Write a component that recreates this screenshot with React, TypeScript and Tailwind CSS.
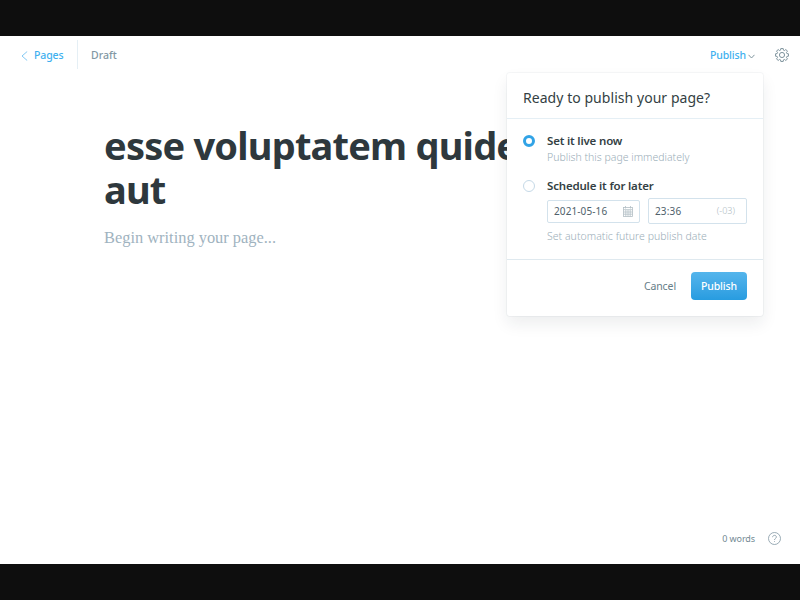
import React from 'react';

function GearIcon() {
  const teeth = Array.from({ length: 8 }, (_, i) => {
    const a = (i * Math.PI) / 4;
    const point = (radius: number, offset: number) =>
      `${(12 + radius * Math.sin(a + offset)).toFixed(2)} ${(12 - radius * Math.cos(a + offset)).toFixed(2)}`;
    return `${i === 0 ? 'M' : 'L'}${point(8.8, -0.27)} L${point(11.3, -0.18)} Q${point(11.8, 0)} ${point(11.3, 0.18)} L${point(8.8, 0.27)} Q${point(8.2, 0.39)} ${point(8.8, 0.51)}`;
  }).join(' ');
  return (
    <svg className="h-[14px] w-[14px]" viewBox="0 0 24 24" fill="none" stroke="#738a94" strokeWidth="1.6" strokeLinejoin="round">
      <path d={`${teeth} Z`} />
      <circle cx="12" cy="12" r="4.4" />
    </svg>
  );
}

function CalendarIcon() {
  return (
    <svg className="h-[11px] w-[10px]" viewBox="0 0 10 11" fill="none" stroke="#b3bfc5" strokeWidth="0.8">
      <rect x="0.5" y="1.5" width="9" height="9" />
      <path d="M0.5 3.7H9.5M0.5 6H9.5M0.5 8.2H9.5M2.8 3.7V10.5M5 3.7V10.5M7.2 3.7V10.5M2.5 0V2.5M7.5 0V2.5" />
    </svg>
  );
}

function TopBar() {
  return (
    <header className="flex h-[38px] items-center pl-[21px] pr-[11.5px] pt-px text-[10.5px] font-medium">
      <a className="flex w-[56px] items-center tracking-[-0.01em] text-[#3eb0ef]">
        <svg className="mr-[6px] h-[10px] w-[7px]" viewBox="0 0 7 10" fill="none" stroke="#65bdf0" strokeWidth="0.8">
          <path d="M6.2 0.5L1 5L6.2 9.5" />
        </svg>
        <span className="pt-px">Pages</span>
      </a>
      <div className="-mt-[3px] h-[29px] w-px bg-[#e5eff5]" />
      <span className="ml-[13px] pt-px text-[#8297a3]">Draft</span>
      <button className="ml-auto flex items-center tracking-[-0.01em] text-[#3eb0ef]">
        <span className="pt-px">Publish</span>
        <svg className="ml-[2px] mt-[2px] h-[5px] w-[7px]" viewBox="0 0 7 5" fill="none" stroke="#738a94" strokeWidth="0.9">
          <path d="M0.5 0.8L3.5 4L6.5 0.8" />
        </svg>
      </button>
      <button className="-mt-px ml-[19.5px]">
        <GearIcon />
      </button>
    </header>
  );
}

function PublishMenu() {
  return (
    <section className="absolute left-[507px] top-[37px] h-[243px] w-[256px] rounded-[3px] bg-white shadow-[0_0_0_1px_rgba(99,114,130,0.06),0_8px_16px_rgba(27,39,51,0.08)]">
      <div className="flex h-[46px] items-center border-b border-[#e5eff5] px-4 pt-[4px] text-[14px] tracking-[0.05px] text-[#343f44]">
        Ready to publish your page?
      </div>
      <div className="h-[141px] border-b border-[#dfe9ef] px-4 pt-[15px]">
        <div className="flex h-[45px]">
          <span className="mt-[1px] h-[12px] w-[12px] rounded-full border-[3.5px] border-[#31a3e6] bg-white" />
          <div className="ml-3">
            <div className="text-[11.5px] font-semibold leading-[14px] tracking-[-0.18px] text-[#343f44]">Set it live now</div>
            <div className="mt-px text-[10.5px] font-light leading-4 text-[#9baeb8]">Publish this page immediately</div>
          </div>
        </div>
        <div className="flex">
          <span className="mt-[1px] h-[12px] w-[12px] rounded-full border border-[#c5d9e7]" />
          <div className="ml-3">
            <div className="text-[11.5px] font-semibold leading-[14px] tracking-[-0.18px] text-[#343f44]">Schedule it for later</div>
            <div className="mt-[5px] flex items-center gap-2 text-[10px] text-[#50616b]">
              <div className="flex h-[23px] w-[93px] items-center justify-between rounded-[2px] border border-[#d3e2ec] pl-[6px] pr-[6px]">
                <span className="tracking-[0.1px]">2021-05-16</span>
                <CalendarIcon />
              </div>
              <div className="flex h-[26px] w-[99px] items-center justify-between rounded-[2px] border border-[#d3e2ec] pl-[6px] pr-[11px]">
                <span className="tracking-[0.15px]">23:36</span>
                <span className="text-[9px] font-light text-[#abb9c0]">(-03)</span>
              </div>
            </div>
            <div className="mt-[4px] text-[10.5px] font-light leading-4 tracking-[0.03px] text-[#9baeb8]">Set automatic future publish date</div>
          </div>
        </div>
      </div>
      <div className="flex items-center justify-end gap-[15px] px-4 pt-[12px] text-[10.5px]">
        <button className="pt-px tracking-[-0.1px] text-[#667d87]">Cancel</button>
        <button className="h-[28px] w-[56px] rounded-[4px] bg-gradient-to-b from-[#54b5ec] to-[#279ce0] pt-px font-medium tracking-[-0.01em] text-white">Publish</button>
      </div>
    </section>
  );
}

export default function App() {
  return (
    <div className="flex h-[600px] w-[800px] flex-col overflow-hidden bg-[#0e0e0e] py-[36px] font-['Noto_Sans',sans-serif]">
      <main className="relative flex h-[528px] flex-col bg-white">
        <TopBar />
        <article className="px-[104px] pt-[49px]">
          <h1 className="whitespace-nowrap text-[38px] font-bold leading-[44px] tracking-[-0.8px] text-[#2e383d]">
            esse voluptatem quidem
            <br />
            aut
          </h1>
          <p className="mt-[17px] font-['Liberation_Serif',serif] text-[16.4px] leading-[20px] text-[#9fb3c0]">Begin writing your page...</p>
        </article>
        <footer className="mt-auto flex h-[51px] items-center justify-end gap-[13px] pr-[19px] text-[9px] text-[#738a94]">
          <span className="tracking-[-0.1px]">0 words</span>
          <svg className="h-[13px] w-[13px]" viewBox="0 0 13 13" fill="none" stroke="#8297a3" strokeWidth="0.8">
            <circle cx="6.5" cy="6.5" r="6" />
            <path d="M4.6 5.2C4.6 2.7 8.4 2.8 8.4 5C8.4 6.5 6.5 6.3 6.5 8M6.5 9.2V10" />
          </svg>
        </footer>
        <PublishMenu />
      </main>
    </div>
  );
}
